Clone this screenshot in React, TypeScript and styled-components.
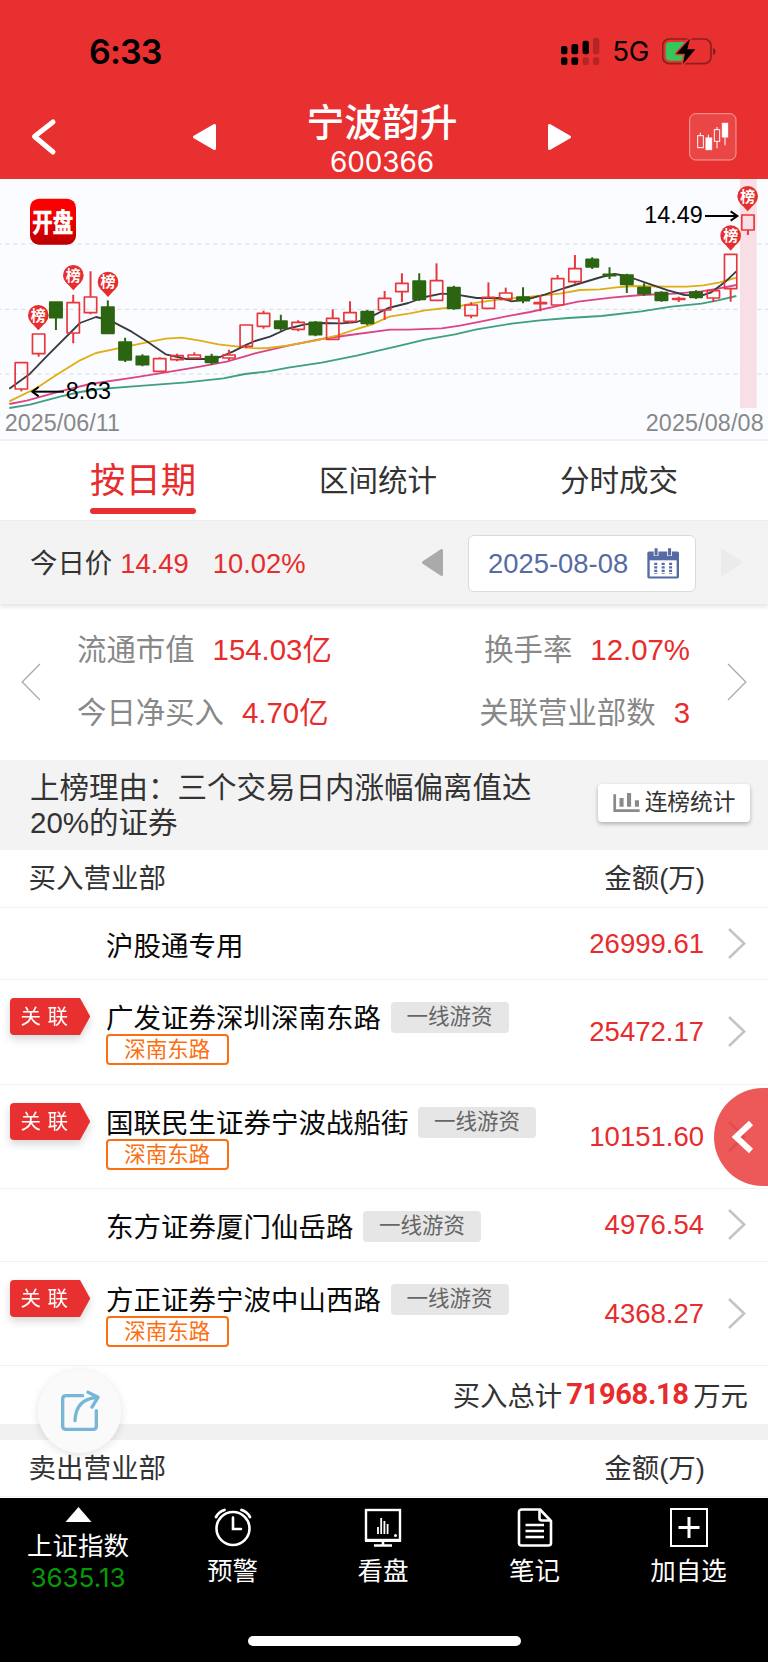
import React from 'react';
import styled, { createGlobalStyle } from 'styled-components';

const RED = '#e93030';
const VALUE_RED = '#e62c2c';

const GlobalStyle = createGlobalStyle`
  * { box-sizing: border-box; }
  body {
    margin: 0;
    background: #fff;
    font-family: "Liberation Sans", "Noto Sans CJK SC", sans-serif;
    color: #333;
  }
`;

const Page = styled.div`
  position: relative;
  width: 768px;
  height: 1662px;
  overflow: hidden;
  display: flex;
  flex-direction: column;
  background: #fff;
  white-space: nowrap;
`;

/* ---------- header ---------- */
const Header = styled.header`
  height: 179px;
  flex: none;
  background: ${RED};
`;
const StatusBar = styled.div`
  height: 97px;
  padding: 5px 52px 0 89px;
  display: flex;
  align-items: center;
  font-family: Inter, sans-serif;
  color: #000;
`;
const Clock = styled.span`
  flex: 1;
  font-size: 34px;
  font-weight: 600;
  letter-spacing: -0.8px;
`;
const Network = styled.span`
  margin: 0 13px 0 12px;
  font-size: 27.6px;
  font-weight: 400;
  letter-spacing: -0.3px;
`;
const SignalBars = styled.svg`
  flex: none;
`;
const NavBar = styled.div`
  height: 79px;
  padding: 0 31px 0 30px;
  display: flex;
  align-items: center;
  justify-content: space-between;
`;
const StockSwitch = styled.div`
  width: 378px;
  margin: 0 88px 0 105px;
  display: flex;
  align-items: center;
  justify-content: space-between;
`;
const Title = styled.div`
  color: #fff;
  text-align: center;
  height: 79px;
`;
const StockName = styled.h1`
  margin: 4px 0 0;
  font-size: 37.8px;
  line-height: 44px;
  font-weight: 500;
`;
const StockCode = styled.div`
  font-family: Inter, sans-serif;
  font-size: 28px;
  line-height: 32px;
  margin-top: 1px;
  letter-spacing: -0.15px;
`;

/* ---------- chart ---------- */
const ChartPanel = styled.section`
  height: 262px;
  flex: none;
  background: #fbfcff;
  border-bottom: 2px solid #f0f0f2;
  svg { display: block; }
`;

/* ---------- tabs ---------- */
const Tabs = styled.nav`
  height: 79px;
  flex: none;
  padding: 0 90px 0 90px;
  display: flex;
  justify-content: space-between;
`;
const Tab = styled.div`
  font-size: 29.5px;
  line-height: 79px;
`;
const ActiveTab = styled.div`
  font-size: 35.4px;
  line-height: 76px;
  color: ${VALUE_RED};
  &::after {
    content: '';
    display: block;
    height: 6px;
    margin-top: -9px;
    border-radius: 3px;
    background: ${RED};
  }
`;
const TabLabel = styled.div`
  height: 76px;
  line-height: 80px;
`;

/* ---------- price / date bar ---------- */
const PriceBar = styled.section`
  position: relative;
  height: 84px;
  flex: none;
  padding: 0 26px 0 30px;
  display: flex;
  align-items: center;
  background: #f3f3f3;
  border-top: 1px solid #ececec;
  box-shadow: 0 3px 4px rgba(0, 0, 0, 0.1);
  font-size: 27.4px;
`;
const PriceText = styled.div`
  flex: 1;
  padding-bottom: 3px;
  display: flex;
  align-items: baseline;
`;
const Price = styled.span`
  margin: 0 24px 0 8px;
  color: ${VALUE_RED};
`;
const Change = styled.span`
  color: ${VALUE_RED};
`;
const DateBox = styled.div`
  width: 228px;
  height: 57px;
  margin: 2px 25px 0;
  padding: 0 16px 0 19px;
  display: flex;
  align-items: center;
  justify-content: space-between;
  background: #fff;
  border: 1.5px solid #dadada;
  border-radius: 6px;
  color: #566ba4;
`;

/* ---------- statistics ---------- */
const Stats = styled.section`
  height: 156px;
  flex: none;
  padding: 0 21px 1px;
  display: flex;
  align-items: center;
  font-size: 29.4px;
`;
const StatColumn = styled.div<{ $right?: boolean }>`
  flex: 1;
  margin: ${p => (p.$right ? '0 37px 0 0' : '0 0 0 36px')};
  display: flex;
  flex-direction: column;
  gap: 19px;
  align-items: ${p => (p.$right ? 'flex-end' : 'flex-start')};
`;
const Stat = styled.div`
  display: flex;
  gap: 18px;
  line-height: 44px;
  color: #888;
`;
const StatValue = styled.span`
  color: ${VALUE_RED};
`;

/* ---------- listing reason ---------- */
const Reason = styled.section`
  height: 90px;
  flex: none;
  padding: 8px 18px 0 30px;
  display: flex;
  justify-content: space-between;
  background: #f3f3f3;
`;
const ReasonText = styled.p`
  width: 515px;
  margin: 2px 0 0;
  font-size: 29.5px;
  line-height: 35px;
  white-space: normal;
`;
const StatsButton = styled.div`
  width: 152px;
  height: 38px;
  margin-top: 16px;
  display: flex;
  align-items: center;
  justify-content: center;
  gap: 5px;
  background: #fff;
  border-radius: 4px;
  box-shadow: 0 2px 4px rgba(0, 0, 0, 0.28);
  font-size: 22.7px;
  line-height: 32px;
  padding-bottom: 2px;
`;

/* ---------- broker list ---------- */
const ListHead = styled.div`
  height: 57.5px;
  flex: none;
  padding: 0 63px 4px 28.5px;
  display: flex;
  align-items: center;
  justify-content: space-between;
  border-bottom: 1.5px solid #f1f1f1;
  font-size: 27.5px;
`;
const Row = styled.div<{ $tall?: boolean }>`
  height: ${p => (p.$tall ? 104.4 : 72.7)}px;
  flex: none;
  padding: 0 22px 0 10px;
  display: flex;
  align-items: center;
  border-bottom: 1.5px solid #f1f1f1;
  font-size: 27.5px;
`;
const BadgeSlot = styled.div`
  width: 96px;
  align-self: flex-start;
  padding-top: 18px;
`;
const LinkBadge = styled.div`
  width: 80px;
  height: 37px;
  display: flex;
  filter: drop-shadow(0 4px 4px rgba(0, 0, 0, 0.16));
  span {
    width: 70px;
    padding-left: 10.5px;
    background: ${RED};
    border-radius: 4px 0 0 4px;
    color: #fff;
    font-size: 20.5px;
    line-height: 37px;
    letter-spacing: 6.5px;
  }
  &::after {
    content: '';
    border-left: 10px solid ${RED};
    border-top: 18.5px solid transparent;
    border-bottom: 18.5px solid transparent;
  }
`;
const Broker = styled.div`
  flex: 1;
  align-self: flex-start;
  padding-top: 22px;
  color: #0a0a0a;
`;
const BrokerName = styled.div`
  height: 32px;
  display: flex;
  gap: 9.5px;
  line-height: 33px;
`;
const GreyTag = styled.span`
  width: 118px;
  height: 31px;
  background: #e6e6e6;
  border-radius: 4px;
  color: #666;
  font-size: 21.5px;
  line-height: 31px;
  text-align: center;
`;
const OrangeTag = styled.div`
  width: 122.5px;
  height: 31px;
  border: 2px solid #fb6f12;
  border-radius: 4px;
  color: #fb6f12;
  font-size: 21.5px;
  line-height: 28px;
  text-align: center;
`;
const Amount = styled.div`
  margin-right: 24px;
  padding-top: 1px;
  color: ${VALUE_RED};
`;
const Total = styled.div`
  height: 58px;
  flex: none;
  padding: 0 20px 3px 0;
  display: flex;
  align-items: center;
  justify-content: flex-end;
  font-size: 27.4px;
`;
const TotalValue = styled.b`
  margin: 0 4.5px 0 4px;
  font-family: Roboto, sans-serif;
  font-size: 29px;
  letter-spacing: -0.3px;
  color: ${VALUE_RED};
`;
const Divider = styled.div`
  height: 15.5px;
  flex: none;
  background: #f1f1f1;
`;

/* ---------- floating controls ---------- */
const ShareButton = styled.div`
  position: absolute;
  left: 38px;
  top: 1370px;
  width: 83px;
  height: 83px;
  padding: 0 0 2px 2px;
  border-radius: 50%;
  background: rgba(250, 250, 250, 0.96);
  box-shadow: 0 2px 10px rgba(0, 0, 0, 0.12);
  display: flex;
  align-items: center;
  justify-content: center;
`;
const DrawerHandle = styled.div`
  position: absolute;
  right: 0;
  top: 1087.5px;
  width: 54px;
  height: 98.5px;
  padding-left: 16.5px;
  border-radius: 49px 0 0 49px / 50% 0 0 50%;
  background: rgba(233, 48, 48, 0.8);
  display: flex;
  align-items: center;
`;

/* ---------- bottom bar ---------- */
const BottomBar = styled.footer`
  position: absolute;
  left: 0;
  right: 0;
  bottom: 0;
  height: 164px;
  padding-top: 9px;
  background: #000;
  display: flex;
  flex-direction: column;
  align-items: flex-start;
  color: #fff;
`;
const BottomItems = styled.div`
  flex: 1;
  display: grid;
  grid-template-columns: 156px 153px 148px 155px 153px;
`;
const BottomItem = styled.div`
  display: flex;
  flex-direction: column;
  align-items: center;
  font-size: 25.5px;
  line-height: 32px;
  svg { display: block; margin-bottom: 8px; }
`;
const IndexValue = styled.div`
  color: #079a07;
  font-family: Inter, sans-serif;
  font-size: 26px;
  line-height: 32px;
`;
const HomeIndicator = styled.div`
  align-self: center;
  width: 273px;
  height: 10px;
  margin-bottom: 16px;
  border-radius: 5px;
  background: #fff;
`;

/* ---------- chart data, in chart units (3 per pixel) ---------- */
type Candle = [up: 0 | 1, top: number, bottom: number, high: number, low: number];
const candles: Candle[] = [
  [1, 564, 643, 564, 650], [1, 478, 537, 478, 546], [0, 382, 429, 382, 466], [1, 384, 475, 360, 506],
  [1, 367, 414, 290, 419], [0, 397, 476, 377, 476], [0, 502, 556, 489, 562], [0, 545, 570, 539, 575],
  [1, 552, 590, 548, 590], [1, 543, 555, 537, 560], [1, 541, 550, 533, 550], [0, 546, 563, 537, 570],
  [1, 541, 550, 525, 557], [1, 451, 515, 451, 521], [1, 416, 455, 408, 462], [0, 439, 461, 420, 468],
  [1, 443, 464, 437, 470], [0, 443, 480, 439, 485], [1, 431, 494, 404, 494], [1, 414, 440, 380, 445],
  [0, 411, 446, 406, 452], [1, 371, 406, 349, 435], [1, 326, 351, 296, 382], [0, 319, 374, 296, 379],
  [1, 318, 377, 266, 377], [0, 339, 401, 333, 405], [1, 391, 423, 383, 431], [1, 368, 401, 323, 401],
  [1, 355, 374, 339, 374], [0, 367, 378, 338, 386], [1, 384, 387, 361, 410], [1, 312, 391, 301, 391],
  [1, 282, 321, 241, 327], [0, 254, 277, 248, 283], [0, 299, 303, 278, 313], [0, 301, 329, 297, 355],
  [0, 339, 357, 326, 363], [0, 354, 377, 350, 381], [1, 372, 374, 366, 382], [0, 352, 368, 347, 373],
  [1, 348, 370, 343, 382], [1, 239, 342, 239, 381], [1, 121, 166, 121, 181],
];
const averages = [
  ['#3f9f7f', '28,700 90,690 180,666 240,652 300,643 400,635 560,623 670,611 735,598 805,590 865,579 965,564 1070,543 1200,513 1275,495 1365,479 1430,464 1535,447 1620,437 1704,430 1804,424 1924,410 2014,396 2104,387 2154,377 2209,364'],
  ['#dc4488', '28,688 80,678 180,650 270,628 400,609 497,593 600,576 680,561 735,545 765,536 865,513 965,493 1050,481 1170,465 1225,465 1325,461 1380,453 1430,443 1535,422 1590,412 1654,398 1734,381 1834,369 1924,361 2024,357 2104,350 2154,342 2209,331'],
  ['#dfae12', '28,680 110,640 170,600 240,557 288,535 340,524 440,503 497,492 545,489 600,498 655,509 735,518 765,521 805,520 860,513 945,498 1010,483 1070,463 1115,450 1168,426 1230,416 1275,407 1365,397 1430,384 1500,374 1570,368 1680,357 1740,346 1800,344 1850,338 1900,334 2000,336 2060,336 2110,332 2160,323 2209,309'],
  ['#3b3b3d', '28,642 90,597 140,545 240,445 288,427 330,437 395,471 440,500 497,539 560,553 630,553 660,547 700,530 740,510 765,499 810,486 860,463 915,449 965,445 1025,446 1070,442 1115,425 1165,400 1225,385 1275,367 1325,357 1365,359 1430,370 1500,370 1535,380 1584,373 1634,360 1694,340 1754,322 1804,307 1844,298 1879,304 1954,330 2004,347 2054,361 2104,363 2134,353 2174,323 2209,290'],
];
const pins = [[115, 422], [220, 302], [324, 322], [2192, 183], [2243, 65]];

const CandleChart = () => (
  <svg width="768" height="260" viewBox="0 13 2304 780">
    <defs>
      <linearGradient id="logo" x1="0" y1="0" x2="0" y2="1">
        <stop offset="0.3" stopColor="#fb0000" />
        <stop offset="1" stopColor="#ba0000" />
      </linearGradient>
    </defs>
    {[208, 404, 598].map(y => (
      <line key={y} x1="-8" x2="2304" y1={y} y2={y} stroke="#d8d9dc" strokeWidth="3" strokeDasharray="12 12" />
    ))}
    <rect x="2220" y="12" width="50" height="688" fill="#f7dfe5" />
    {averages.map(([color, points]) => (
      <polyline key={color} points={points} fill="none" stroke={color} strokeWidth="5.5" strokeLinejoin="round" />
    ))}
    {candles.map(([up, top, bottom, high, low], i) => {
      const x = 64 + i * 51.9;
      const color = up ? '#e8373b' : '#2c6511';
      return (
        <g key={i} stroke={color} strokeWidth="6" fill={up ? 'none' : color}>
          <path d={`M${x} ${high}V${top}M${x} ${bottom}V${low}`} />
          <rect x={x - 18.5} y={top} width="37" height={bottom - top} strokeWidth="5" strokeLinejoin="round" />
        </g>
      );
    })}
    {pins.map(([x, y]) => (
      <g key={x}>
        <circle cx={x} cy={y} r="31" fill="#e62e2e" />
        <path d={`M${x - 20} ${y + 23}L${x} ${y + 45}L${x + 20} ${y + 23}Z`} fill="#e62e2e" />
        <text x={x} y={y + 16} fontSize="45" fontWeight="700" fill="#fff" textAnchor="middle">榜</text>
      </g>
    ))}
    <rect x="90" y="72" width="138" height="138" rx="27" fill="url(#logo)" />
    <text x="158" y="168" fontSize="61" fontWeight="700" fill="#fff" stroke="#fff" strokeWidth="1.5" textAnchor="middle" transform="matrix(1 0 0 1.27 0 -42)">开盘</text>
    <g fill="none" stroke="#000" strokeWidth="6">
      <path d="M192 651H98" />
      <path d="M116 637L97 651L116 665" />
      <path d="M2115 124H2211" />
      <path d="M2192 110L2212 124L2192 138" />
    </g>
    <text x="197" y="673" fontSize="70" fill="#000">8.63</text>
    <text x="1933" y="146" fontSize="70" fill="#000">14.49</text>
    <text x="14" y="768" fontSize="70" fill="#888" textLength="346">2025/06/11</text>
    <text x="2291" y="768" fontSize="70" fill="#888" textAnchor="end" textLength="354">2025/08/08</text>
  </svg>
);

const SignalIcon = () => (
  <SignalBars width="39" height="27" viewBox="533 114 116 80">
    <rect x="533" y="138" width="19" height="24" rx="6" />
    <rect x="564" y="132" width="20" height="30" rx="6" />
    <rect x="597" y="122" width="19" height="40" rx="6" />
    <rect x="628" y="114" width="19" height="48" rx="6" opacity="0.22" />
    <rect x="533" y="171" width="19" height="23" rx="6" />
    <rect x="564" y="171" width="20" height="23" rx="6" />
    <rect x="597" y="171" width="19" height="23" rx="6" opacity="0.22" />
    <rect x="628" y="171" width="19" height="23" rx="6" opacity="0.22" />
  </SignalBars>
);

const BatteryIcon = () => (
  <svg width="54" height="27" viewBox="834 113 162 81">
    <rect x="836" y="116" width="145" height="74" rx="20" fill="none" stroke="#8b1f1f" strokeWidth="5" />
    <path d="M987 142Q995 145 995 153T987 165Z" fill="#8b1f1f" />
    <path d="M858 125H903V181H858Q845 181 845 168V138Q845 125 858 125Z" fill="#35c759" />
    <path d="M918 115L877 160H903L897 191L934 147H910Z" fill="#000" stroke={RED} strokeWidth="9" paintOrder="stroke" strokeLinejoin="round" />
  </svg>
);

const Triangle = ({ right, color, w, h }: { right?: boolean; color: string; w: number; h: number }) => (
  <svg width={w} height={h} viewBox="0 0 22 26" preserveAspectRatio="none">
    <path d={right ? 'M1.5 1.5V24.5L20.5 13Z' : 'M20.5 1.5V24.5L1.5 13Z'} fill={color} stroke={color} strokeWidth="3" strokeLinejoin="round" />
  </svg>
);

const KlineIcon = () => (
  <svg width="48" height="48" viewBox="915 337 144 144">
    <rect x="917" y="339" width="139" height="139" rx="18" fill="rgba(255,255,255,.11)" stroke="rgba(255,255,255,.5)" strokeWidth="3" />
    <g fill="none" stroke="#fff" strokeWidth="3">
      <path d="M949 396V405M973 402V412M999 379V387M999 422V443M1023 410V434" />
      <rect x="941" y="405" width="17" height="36" />
      <rect x="966" y="412" width="17" height="35" fill="#fff" />
      <rect x="991" y="387" width="16" height="35" />
      <rect x="1015" y="368" width="16" height="41" fill="#fff" />
    </g>
  </svg>
);

const CalendarIcon = () => (
  <svg width="32" height="31" viewBox="791 323 95 91">
    <path d="M797 333H881Q886 333 886 338V408Q886 413 881 413H797Q792 413 792 408V338Q792 333 797 333Z" fill="#566ba4" />
    <path d="M799 359H879V407H799Z" fill="#fff" />
    <path d="M818 323V346M858 323V346" stroke="#fff" strokeWidth="14" />
    <path d="M818 323V345M858 323V345" stroke="#566ba4" strokeWidth="9" />
    <path d="M817 366V400M839 366V400M861 366V400" stroke="#566ba4" strokeWidth="9" strokeDasharray="7 3.5" />
  </svg>
);

const Chevron = ({ left, w, h, color, stroke }: { left?: boolean; w: number; h: number; color: string; stroke: number }) => (
  <svg width={w} height={h} viewBox={`0 0 ${w} ${h}`}>
    <path
      d={left ? `M${w - 1} 1L${stroke / 2 + 0.5} ${h / 2}L${w - 1} ${h - 1}` : `M1 1L${w - stroke / 2 - 0.5} ${h / 2}L1 ${h - 1}`}
      fill="none" stroke={color} strokeWidth={stroke}
    />
  </svg>
);

type BrokerRow = { name: string; amount: string; linked?: boolean; tag?: boolean };
const buyers: BrokerRow[] = [
  { name: '沪股通专用', amount: '26999.61' },
  { name: '广发证券深圳深南东路', amount: '25472.17', linked: true, tag: true },
  { name: '国联民生证券宁波战船街', amount: '10151.60', linked: true, tag: true },
  { name: '东方证券厦门仙岳路', amount: '4976.54', tag: true },
  { name: '方正证券宁波中山西路', amount: '4368.27', linked: true, tag: true },
];

export default function App() {
  return (
    <>
      <GlobalStyle />
      <Page>
        <Header>
          <StatusBar>
            <Clock>6:33</Clock>
            <SignalIcon />
            <Network>5G</Network>
            <BatteryIcon />
          </StatusBar>
          <NavBar>
            <svg width="28" height="38" viewBox="0 0 28 38">
              <path d="M23 4L4.5 18.5L23 34" fill="none" stroke="#fff" strokeWidth="5" strokeLinecap="round" strokeLinejoin="round" />
            </svg>
            <StockSwitch>
              <Triangle color="#fff" w={23} h={26} />
              <Title>
                <StockName>宁波韵升</StockName>
                <StockCode>600366</StockCode>
              </Title>
              <Triangle right color="#fff" w={23} h={26} />
            </StockSwitch>
            <KlineIcon />
          </NavBar>
        </Header>

        <ChartPanel><CandleChart /></ChartPanel>

        <Tabs>
          <ActiveTab><TabLabel>按日期</TabLabel></ActiveTab>
          <Tab>区间统计</Tab>
          <Tab>分时成交</Tab>
        </Tabs>

        <PriceBar>
          <PriceText>
            今日价<Price>14.49</Price><Change>10.02%</Change>
          </PriceText>
          <Triangle color="#aaa" w={21} h={27} />
          <DateBox>2025-08-08<CalendarIcon /></DateBox>
          <Triangle right color="#ebebeb" w={21} h={27} />
        </PriceBar>

        <Stats>
          <Chevron left w={20} h={38} color="#aaa" stroke={1.3} />
          <StatColumn>
            <Stat>流通市值<StatValue>154.03亿</StatValue></Stat>
            <Stat>今日净买入<StatValue>4.70亿</StatValue></Stat>
          </StatColumn>
          <StatColumn $right>
            <Stat>换手率<StatValue>12.07%</StatValue></Stat>
            <Stat>关联营业部数<StatValue>3</StatValue></Stat>
          </StatColumn>
          <Chevron w={20} h={38} color="#aaa" stroke={1.3} />
        </Stats>

        <Reason>
          <ReasonText>上榜理由：三个交易日内涨幅偏离值达20%的证券</ReasonText>
          <StatsButton>
            <svg width="27" height="19" viewBox="691 114 79 55">
              <path d="M696 117V165H769" fill="none" stroke="#8a8a8a" strokeWidth="8" />
              <path d="M716 128V154M738 114V154M761 135V154" stroke="#8a8a8a" strokeWidth="12" />
            </svg>
            连榜统计
          </StatsButton>
        </Reason>

        <ListHead><span>买入营业部</span><span>金额(万)</span></ListHead>
        {buyers.map(b => (
          <Row key={b.name} $tall={b.linked}>
            <BadgeSlot>{b.linked && <LinkBadge><span>关联</span></LinkBadge>}</BadgeSlot>
            <Broker>
              <BrokerName>{b.name}{b.tag && <GreyTag>一线游资</GreyTag>}</BrokerName>
              {b.linked && <OrangeTag>深南东路</OrangeTag>}
            </Broker>
            <Amount>{b.amount}</Amount>
            <Chevron w={18} h={31} color="#c4c4c4" stroke={2.6} />
          </Row>
        ))}
        <Total>买入总计<TotalValue>71968.18</TotalValue>万元</Total>
        <Divider />
        <ListHead><span>卖出营业部</span><span>金额(万)</span></ListHead>

        <DrawerHandle>
          <svg width="24" height="34" viewBox="0 0 24 34">
            <path d="M20 3L5 17L20 31" fill="none" stroke="#fff" strokeWidth="6" />
          </svg>
        </DrawerHandle>
        <ShareButton>
          <svg width="39" height="42" viewBox="184 896 117 126">
            <g fill="none" stroke="#78b6d8" strokeWidth="10" strokeLinecap="round" strokeLinejoin="round">
              <path d="M249 913H199Q189 913 189 923V1005Q189 1014 199 1014H281Q290 1014 290 1005V958" />
              <path d="M226 988Q228 923 292 918M265 903L295 918L277 947" />
            </g>
          </svg>
        </ShareButton>

        <BottomBar>
          <BottomItems>
            <BottomItem>
              <svg width="27" height="15" viewBox="0 0 27 15"><path d="M13.5 0L26.5 15H0.5Z" fill="#fff" /></svg>
              上证指数
              <IndexValue>3635.13</IndexValue>
            </BottomItem>
            <BottomItem>
              <svg width="38" height="40" viewBox="0 0 38 40" fill="none" stroke="#fff" strokeWidth="2.6" strokeLinecap="round">
                <circle cx="19" cy="21.5" r="16.5" />
                <path d="M19 10.5V22H27" />
                <path d="M2 10Q5 4.5 10.5 3M36 10Q33 4.5 27.5 3" strokeWidth="2.8" />
              </svg>
              预警
            </BottomItem>
            <BottomItem>
              <svg width="38" height="40" viewBox="0 0 38 40" fill="none" stroke="#fff" strokeWidth="2.4">
                <rect x="2" y="3" width="34" height="30" />
                <path d="M1 33.5H37" strokeWidth="3" />
                <path d="M19 33V38M10 38.5H28" strokeWidth="2.6" />
                <path d="M14 20V27M17.2 11V27M20.4 14V27M23.6 17V27" strokeWidth="1.8" />
                <circle cx="31.5" cy="28.5" r="1.5" fill="#fff" stroke="none" />
              </svg>
              看盘
            </BottomItem>
            <BottomItem>
              <svg width="36" height="40" viewBox="0 0 36 40" fill="none" stroke="#fff" strokeWidth="2.6" strokeLinejoin="round">
                <path d="M5 2.5H23L34 14V36Q34 38.5 31.5 38.5H4.5Q2 38.5 2 36V5Q2 2.5 5 2.5Z" />
                <path d="M22.5 3V11.5Q22.5 13.5 25 13.5H33" />
                <path d="M8.5 18H27M8.5 24H27M8.5 30H27" />
              </svg>
              笔记
            </BottomItem>
            <BottomItem>
              <svg width="38" height="40" viewBox="0 0 38 40" fill="none" stroke="#fff" strokeWidth="2">
                <rect x="1" y="2" width="36" height="37" />
                <path d="M19 10V31M8.5 20.5H29.5" strokeWidth="3" />
              </svg>
              加自选
            </BottomItem>
          </BottomItems>
          <HomeIndicator />
        </BottomBar>
      </Page>
    </>
  );
}
